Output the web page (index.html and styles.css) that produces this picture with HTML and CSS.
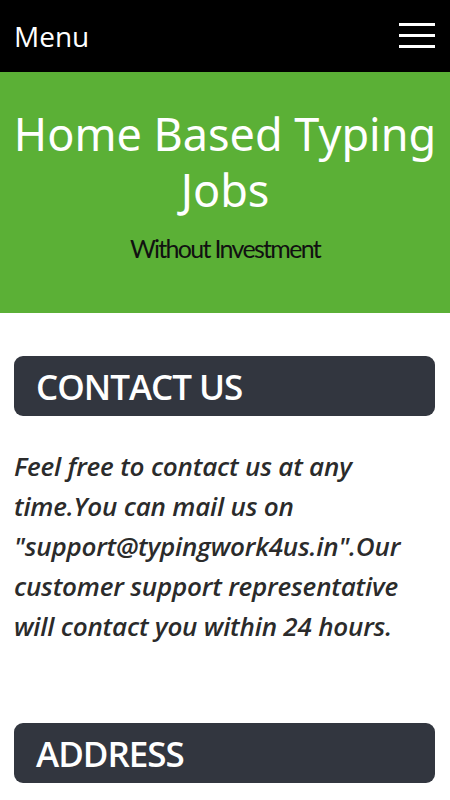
FILE: index.html
```html
<!DOCTYPE html>
<html>
<head>
<meta charset="utf-8">
<link rel="stylesheet" href="styles.css">
</head>
<body>
<header class="topbar">
  <span class="menu-label">Menu</span>
  <span class="burger"><i></i><i></i><i></i></span>
</header>
<section class="hero">
  <h1 class="hero-title">Home Based Typing Jobs</h1>
  <p class="hero-sub">Without Investment</p>
</section>
<main class="content">
  <h2 class="section-head">CONTACT US</h2>
  <p class="section-text">Feel free to contact us at any time.You can mail us on "support@typingwork4us.in".Our customer support representative will contact you within 24 hours.</p>
  <h2 class="section-head address">ADDRESS</h2>
</main>
</body>
</html>
```
FILE: styles.css
```css
html, body { margin: 0; padding: 0; background: #fff; }
body { font-family: "Open Sans", sans-serif; width: 450px; overflow: hidden; }
.topbar {
  height: 72px; background: #000; display: flex; align-items: center;
  justify-content: space-between; padding: 0 15px 0 14px; box-sizing: border-box;
}
.menu-label { color: #fff; font-size: 28px; line-height: 1; margin-top: -1px; }
.burger { display: flex; flex-direction: column; gap: 8px; width: 36px; margin-top: -2px; }
.burger i { display: block; height: 3px; background: #fff; }
.hero {
  background: #5bb036; height: 241px; box-sizing: border-box;
  padding-top: 34px; text-align: center;
}
.hero-title {
  margin: 0; color: #fff; font-family: "Noto Sans", sans-serif; font-weight: 400;
  font-size: 45px; line-height: 56px;
}
.hero-sub {
  margin: 15px 0 0; color: #111; font-family: "Lato", sans-serif; font-size: 25px; line-height: 30px;
  letter-spacing: -1.7px;
}
.content { padding: 43px 15px 0 14px; }
.section-head {
  margin: 0; background: #32363f; color: #fff; border-radius: 9px; height: 60px;
  display: flex; align-items: center; padding-left: 22px;
  font-size: 35px; font-weight: 600; letter-spacing: -1px;
}
.section-text {
  margin: 30px 0 0; font-style: italic; font-weight: 600; color: #2b2b2b; font-size: 26px; line-height: 40px;
  letter-spacing: -0.2px;
}
.address { margin-top: 77px; }
```
